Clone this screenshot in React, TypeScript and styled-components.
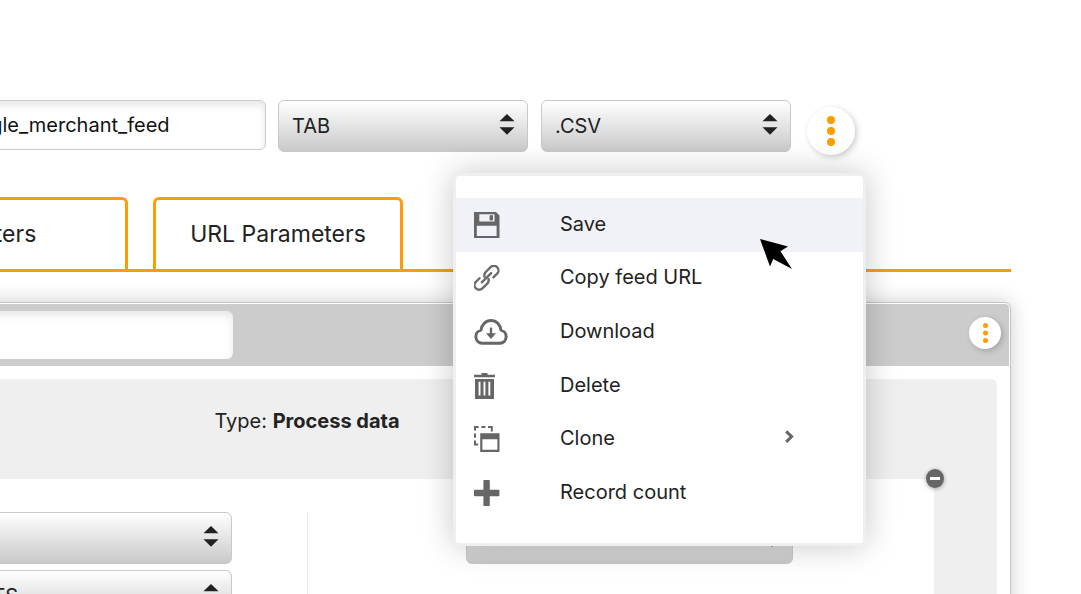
import React from 'react';
import styled, { createGlobalStyle } from 'styled-components';

const GlobalStyle = createGlobalStyle`
  *, *::before, *::after { box-sizing: border-box; }
  body {
    margin: 0;
    background: #fff;
    color: #222;
    font-family: Inter, "Liberation Sans", sans-serif;
    font-size: 20px;
    font-optical-sizing: none;
    line-height: 24px;
  }
  button, input, select { font: inherit; font-optical-sizing: inherit; color: inherit; margin: 0; }
`;

const Page = styled.div`
  height: 100vh;
  overflow: hidden;
  display: flex;
`;

const Workspace = styled.main`
  flex: 1;
  min-width: 0;
  margin: 0 70px 0 -397px;
  padding-top: 100px;
  display: flex;
  flex-direction: column;
`;

const Toolbar = styled.div`
  flex: none;
  display: flex;
  align-items: flex-start;
  justify-content: flex-start;
  gap: 12px;
  padding-left: 336px;
  height: 97px;
`;

const FormatGroup = styled.div`
  display: flex;
  gap: 13px;
`;

const TextInput = styled.input<{ $plain?: boolean }>`
  width: 327px;
  height: ${(p) => (p.$plain ? 48 : 50)}px;
  padding: 0 14px;
  border: ${(p) => (p.$plain ? 'none' : '1px solid #ccc')};
  border-radius: 6px;
  background: #fff;
  color: #111;
  box-shadow: inset 0 4px 8px rgba(0, 0, 0, 0.1);
  outline: none;
`;

const SelectBox = styled.div<{ $width?: string }>`
  position: relative;
  width: ${(p) => p.$width ?? '250px'};
  height: 52px;
`;

const SelectField = styled.select`
  appearance: none;
  width: 100%;
  height: 100%;
  padding: 0 40px 0 13px;
  border: 1px solid #c8c8c8;
  border-radius: 6px;
  background: linear-gradient(#fff, #c9c9c9);
  outline: none;
`;

const SelectArrows = styled.svg`
  position: absolute;
  top: 14px;
  right: 13px;
  pointer-events: none;
`;

const MenuAnchor = styled.div`
  position: relative;
  margin: 7px 0 0 4px;
`;

const RoundButton = styled.button<{ $size: number }>`
  display: flex;
  align-items: center;
  justify-content: center;
  width: ${(p) => p.$size}px;
  height: ${(p) => p.$size}px;
  padding: 0;
  border: none;
  border-radius: 50%;
  background: #fff;
  box-shadow: 2px 2px 6px rgba(0, 0, 0, 0.2);
`;

const Menu = styled.div`
  position: absolute;
  z-index: 5;
  top: 66px;
  right: -11px;
  width: 413px;
  height: 373px;
  padding: 22px 0 23px;
  display: grid;
  grid-auto-rows: 1fr;
  border: 3px solid #efefef;
  border-radius: 6px;
  background: #fff;
  box-shadow: 0 0 32px rgba(0, 0, 0, 0.22);
`;

const MenuItem = styled.button<{ $active?: boolean }>`
  position: relative;
  display: grid;
  grid-template-columns: 86px 1fr auto;
  align-items: center;
  width: 100%;
  padding: 0 69px 0 18px;
  border: none;
  background: ${(p) => (p.$active ? '#f1f2f7' : 'transparent')};
  text-align: left;

  svg { display: block; }
`;

const MenuLabel = styled.span`
  padding-bottom: 2px;
`;

const Pointer = styled.svg`
  position: absolute;
  z-index: 1;
  top: 41px;
  right: 71px;
`;

const Tabs = styled.nav`
  flex: none;
  display: flex;
  gap: 25px;
  padding-left: 275px;
  border-bottom: 3px solid #ff9d00;
`;

const Tab = styled.button`
  width: 250px;
  height: 72px;
  padding: 0 0 2px;
  border: 3px solid #ff9d00;
  border-bottom: none;
  border-radius: 6px 6px 0 0;
  background: #fff;
  font-size: 23px;
`;

const Panel = styled.section`
  flex: 1 0 auto;
  margin-top: 30px;
  padding: 1px;
  border: 1px solid #c4c4c4;
  border-radius: 6px;
  background: #fff;
  box-shadow: 0 0 20px rgba(0, 0, 0, 0.2);
`;

const PanelHeader = styled.header`
  display: flex;
  align-items: flex-start;
  justify-content: space-between;
  height: 62px;
  padding: 7px 8px 0 301px;
  background: #ccc;
  border-top-right-radius: 4px;
`;

const HeaderActions = styled.div`
  padding-top: 6px;
`;

const Step = styled.div`
  margin: 13px 12px 0;
  padding: 0 63px;
  border-radius: 6px;
  background: #efefef;
`;

const StepHeader = styled.div`
  position: relative;
  height: 100px;
  padding-top: 30px;
  text-align: center;
`;

const CollapseButton = styled.button`
  position: absolute;
  right: -10px;
  bottom: -9px;
  display: flex;
  align-items: center;
  justify-content: center;
  width: 18px;
  height: 19px;
  padding: 0;
  border: none;
  border-radius: 50%;
  background: #666;
  box-shadow: 0 1px 4px rgba(0, 0, 0, 0.35);
`;

const StepBody = styled.div`
  display: grid;
  grid-template-columns: 1fr 1fr;
  padding: 33px 0;
  background: #fff;
`;

const FieldColumn = styled.div<{ $side: 'left' | 'right' }>`
  display: flex;
  flex-direction: column;
  gap: 6px;
  padding: ${(p) => (p.$side === 'left' ? '0 75px 0 225px' : '0 141px 0 158px')};
  border-left: ${(p) => (p.$side === 'right' ? '1px solid #ececec' : 'none')};
`;

const Dots = ({ height, r }: { height: number; r: number }) => (
  <svg width={r * 2} height={height} viewBox={`0 0 ${r * 2} ${height}`} fill="#ff9d00" aria-hidden="true">
    <circle cx={r} cy={r} r={r} />
    <circle cx={r} cy={height / 2} r={r} />
    <circle cx={r} cy={height - r} r={r} />
  </svg>
);

const Select = ({ label, value, width }: { label: string; value: string; width?: string }) => (
  <SelectBox $width={width}>
    <SelectField aria-label={label} defaultValue={value}>
      <option value={value}>{value}</option>
    </SelectField>
    <SelectArrows width="16" height="21" viewBox="0 0 16 21" fill="#222" aria-hidden="true">
      <path d="M8 0L15.5 7.3H.5zM8 20.8L.5 13.2h15z" />
    </SelectArrows>
  </SelectBox>
);

const SaveIcon = () => (
  <svg width="26" height="26" viewBox="0 0 26 26" fill="#666" aria-hidden="true">
    <path
      fillRule="evenodd"
      d="M0 0h22l3.5 3.5V26H0zM5.3 2.2v7.2h15.2V2.2zM2.8 13.8v10.2h19.8V13.8z"
    />
    <path d="M15.6 3.2h3.4v5.2h-3.4z" />
  </svg>
);

const LinkIcon = () => (
  <svg width="26" height="26" viewBox="0 0 26 26" fill="none" stroke="#6c6c6c" strokeWidth="2.4" strokeLinecap="round" aria-hidden="true">
    <g transform="translate(12.5 12.8) rotate(-45)">
      <path d="M5.2 4.6H10.4a4.6 4.6 0 0 0 0 -9.2H3.6a4.6 4.6 0 0 0 -4.2 2.4" />
      <path d="M-5.2 -4.6H-10.4a4.6 4.6 0 0 0 0 9.2H-3.6a4.6 4.6 0 0 0 4.2 -2.4" />
      <path d="M-6.6 0H6.6" />
    </g>
  </svg>
);

const DownloadIcon = () => (
  <svg width="34" height="26" viewBox="0 0 34 26" fill="none" stroke="#666" strokeWidth="3" aria-hidden="true">
    <path d="M8 24.3a6.7 6.7 0 0 1-1-13.2C7.6 5.6 11.8 1.5 17 1.5s9.4 4.1 10 9.6a6.7 6.7 0 0 1-1 13.2z" strokeLinejoin="round" />
    <path d="M17 8.6v8" strokeWidth="2.4" />
    <path d="M12 14.2h10l-5 5.8z" fill="#666" stroke="none" />
  </svg>
);

const TrashIcon = () => (
  <svg width="21" height="26" viewBox="0 0 21 26" fill="#666" aria-hidden="true">
    <path d="M7.5 0h6v1.8H21v2.4H0V1.8h7.5z" />
    <path fillRule="evenodd" d="M1 6h19v20H1zM4.6 8.8v13.6h1.9V8.8zM9.5 8.8v13.6h1.9V8.8zM14.4 8.8v13.6h1.9V8.8z" />
  </svg>
);

const CloneIcon = () => (
  <svg width="26" height="26" viewBox="0 0 26 26" fill="#666" aria-hidden="true">
    <path fillRule="evenodd" d="M6.2 7.3h19.3V26H6.2zM8.4 13.2v10.6h15V13.2z" />
    <path
      d="M1 4.6V1h3.6M7.4 1h4M14 1h3.8v4.4M1 7.4v4.4M1 14.6v3.9h3.2"
      fill="none"
      stroke="#666"
      strokeWidth="2"
    />
  </svg>
);

const PlusIcon = () => (
  <svg width="26" height="26" viewBox="0 0 26 26" fill="#666" aria-hidden="true">
    <rect x="0" y="9.8" width="25.4" height="6.4" rx="0.8" />
    <rect x="9.4" y="0" width="6.4" height="26" rx="0.8" />
  </svg>
);

const ChevronIcon = () => (
  <svg width="9" height="18" viewBox="0 0 9 18" fill="none" stroke="#666" strokeWidth="3" aria-hidden="true">
    <path d="M1.2 1.4L6.6 6.6L1.2 11.8" />
  </svg>
);

const menuItems = [
  { label: 'Save', Icon: SaveIcon, active: true },
  { label: 'Copy feed URL', Icon: LinkIcon },
  { label: 'Download', Icon: DownloadIcon },
  { label: 'Delete', Icon: TrashIcon },
  { label: 'Clone', Icon: CloneIcon, nested: true },
  { label: 'Record count', Icon: PlusIcon },
];

const FeedMenu = () => (
  <Menu role="menu">
    {menuItems.map(({ label, Icon, active, nested }) => (
      <MenuItem key={label} type="button" role="menuitem" $active={active}>
        <Icon />
        <MenuLabel>{label}</MenuLabel>
        {nested && <ChevronIcon />}
        {active && (
          <Pointer width="32" height="30" viewBox="0 0 32 30" aria-hidden="true">
            <path d="M0 0L28 7.4L20.4 12.2L32 30L13.2 20L10 27.4Z" />
          </Pointer>
        )}
      </MenuItem>
    ))}
  </Menu>
);

export default function App() {
  return (
    <>
      <GlobalStyle />
      <Page>
        <Workspace>
          <Toolbar>
            <TextInput aria-label="Feed name" defaultValue="google_merchant_feed" />
            <FormatGroup>
              <Select label="Separator" value="TAB" />
              <Select label="File type" value=".CSV" />
            </FormatGroup>
            <MenuAnchor>
              <RoundButton type="button" $size={48} aria-label="Feed actions" aria-haspopup="menu">
                <Dots height={30} r={4} />
              </RoundButton>
              <FeedMenu />
            </MenuAnchor>
          </Toolbar>
          <Tabs>
            <Tab type="button">Filters</Tab>
            <Tab type="button">URL Parameters</Tab>
          </Tabs>
          <Panel>
            <PanelHeader>
              <TextInput $plain aria-label="Step name" />
              <HeaderActions>
                <RoundButton type="button" $size={32} aria-label="Step actions">
                  <Dots height={20} r={2.5} />
                </RoundButton>
              </HeaderActions>
            </PanelHeader>
            <Step>
              <StepHeader>
                Type: <strong>Process data</strong>
                <CollapseButton type="button" aria-label="Collapse">
                  <svg width="10" height="3" viewBox="0 0 10 3" aria-hidden="true">
                    <rect width="10" height="3" fill="#fff" />
                  </svg>
                </CollapseButton>
              </StepHeader>
              <StepBody>
                <FieldColumn $side="left">
                  <Select label="Field" value="" width="100%" />
                  <Select label="Source" value="VARIANTS" width="100%" />
                </FieldColumn>
                <FieldColumn $side="right">
                  <Select label="Action" value="" width="100%" />
                </FieldColumn>
              </StepBody>
            </Step>
          </Panel>
        </Workspace>
      </Page>
    </>
  );
}
